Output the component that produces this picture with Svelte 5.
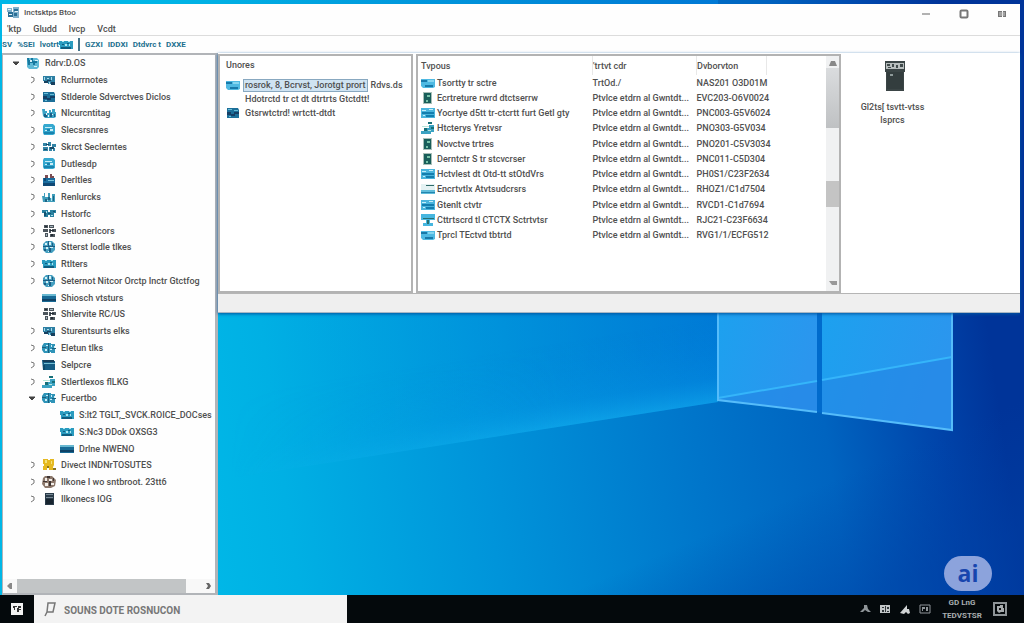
<script lang="ts">
  type Layer = [string, string];
  type Node = { label: string; icon: string; level: number; state?: 'open' | 'closed' };

  const icons: Record<string, Layer[]> = {
    root: [['#5fb9d6', 'M1 1h10l2 2v7l-2 2H3l-2-2z'], ['#17789f', 'M1 1h2v2h2V1h2v3h4v2H9v2H7V6H4v2H2z'], ['#d7f1f8', 'M4 3h2v2H4zM9 3h3v1H9zM8 9h3v1H8z']],
    app: [['#7fb0cc', 'M1 1h5v4H1zM7 0h6v11H7z'], ['#2a6f96', 'M2 5h5v5H2zM8 2h4v2H8zM8 6h3v3H8z'], ['#e3f2f8', 'M2 2h3v1H2zM9 4h3v1H9zM3 7h3v1H3z']],
    monitors: [['#2d7fa3', 'M1 2h5v5H1zM5 2h8v3H5zM6 5h7v5H6z'], ['#163f5d', 'M2 7h4v2H2zM9 8h4v3H9zM5 6h4v1H5z'], ['#a9dcec', 'M2 3h1v3H2zM5 4h2v1H5zM9 3h1v3H9zM7 8h1v2H7z']],
    solid: [['#1c6f99', 'M1 1h11l1 2v8H1z'], ['#153f66', 'M1 5h4v2h3V5h5v2H9v2H5V8H1z'], ['#68bdd8', 'M2 2h4v1H2zM8 3h4v1H8zM3 9h2v1H3z']],
    people: [['#39a3c6', 'M0 2h3v2h2v2h2V3h2v2h1V2h3v3h1v5l-2 1H3L1 9z'], ['#1a5f87', 'M2 7h3v3H2zM8 6h2v4H8zM12 7h1v3h-1z'], ['#e8f8fc', 'M4 6h1v2H4zM6 8h1v2H6zM10 7h1v1h-1z']],
    drive: [['#35a8cf', 'M2 0h9l2 2v8l-2 1H2l-1-2V2z'], ['#c9eef8', 'M3 3h7v1H3zM8 5h3v2H8zM3 6h2v1H3z'], ['#1982ad', 'M2 8h10v2H2zM5 5h3v2H5z']],
    chips: [['#3384a6', 'M1 2h4v3H1zM6 1h3v4H6zM10 3h4v3h-4zM1 6h5v4H1zM7 6h3v4H7zM11 7h2v3h-2z'], ['#174866', 'M2 8h3v1H2zM8 6h4v2H8zM4 3h3v1H4z']],
    bag: [['#1a6d9f', 'M1 4h12v8H1z'], ['#0f4874', 'M1 9h12v3H1zM2 4h2v3H2z'], ['#7b4c53', 'M3 1h3v3H3zM8 0h2v4H8zM10 2h2v2h-2z'], ['#7dc8de', 'M6 6h6v1H6z']],
    towers: [['#3f9dbb', 'M0 5h2V2h1v4h3V2h2v5h2V3h3v8H1z'], ['#1d6484', 'M3 8h2v3H3zM6 6h2v3H6zM11 5h1v5h-1z'], ['#bce7f0', 'M5 9h1v1H5zM9 7h1v3H9z']],
    links: [['#28809f', 'M0 2h6v2h2V2h6v3h-2v4H8V7H6v2H2V5H0z'], ['#145271', 'M2 4h2v4H2zM6 5h3v1H6zM11 3h2v1h-2z'], ['#a9e1ee', 'M4 3h1v2H4zM9 7h2v1H9z']],
    dark: [['#4c555c', 'M2 0h4v3H2zM7 0h5v3H7zM1 4h5v3H1zM7 4h2v4H7zM10 4h4v3h-4zM3 8h3v4H3zM8 9h5v3H8z'], ['#232c34', 'M3 1h2v1H3zM8 5h4v1H8zM9 9h2v2H9z'], ['#a7b7c0', 'M8 1h3v1H8zM4 9h1v2H4z']],
    globe: [['#459fc0', 'M4 0h6l3 3v6l-3 3H4L1 9V3z'], ['#d6f1f7', 'M3 2h2v2H3zM7 1h2v3H7zM4 6h2v2H4zM8 6h3v1H8zM6 10h2v1H6z'], ['#1b5d84', 'M1 5h12v1H1zM6 0h1v5H6zM7 7h2v4H7zM10 2h1v3h-1zM2 8h2v2H2z']],
    cluster: [['#2f94b8', 'M2 1h7v1h4v9h-4v-1H8v1H2L0 8V4z'], ['#cfeef6', 'M4 3h2v1H4zM9 3h1v2H9zM3 7h2v2H3zM8 7h2v1H8zM12 4h1v2h-1z'], ['#1b607f', 'M6 1h1v10H6zM0 5h4v1H0zM10 6h4v1h-4z']],
    keys: [['#2a9bbf', 'M0 2h14v8H1V6H0z'], ['#105d7f', 'M2 8h10v2H2zM3 5h2v1H3zM8 4h2v1H8z'], ['#aee8f2', 'M3 2h2v1H3zM6 5h2v2H6zM10 5h1v2h-1zM9 2h2v1H9z']],
    bar: [['#186a95', 'M0 2h14v8H0z'], ['#68b8d1', 'M0 2h14v2H0z'], ['#0e4266', 'M0 7h14v2H0z']],
    folder: [['#145c83', 'M0 1h6l1 1h6v9H1z'], ['#153d59', 'M1 1h11v2H1z'], ['#75bfd4', 'M2 4h11v1H2z'], ['#0d4969', 'M1 6h2v5H1z']],
    gold: [['#e5b921', 'M1 0h5v1h2V0h4v6l-1 2v3H7V8H5v3H1V7h1V5H1z'], ['#f5e27c', 'M3 1h2v3H3zM9 2h1v3H9z'], ['#8b751b', 'M5 7h2v2H5zM11 9h3v2h-3z']],
    brown: [['#8c786b', 'M3 0h7l4 4-1 6-4 2H3L0 8l1-6z'], ['#f2eee9', 'M3 2h2v3H3zM7 3h3v2H7zM3 7h3v3H3zM9 7h3v2H9z'], ['#3e3432', 'M5 0h3v2H5zM1 5h4v1H1zM7 5h2v5H7zM11 2h1v3h-1z']],
    server: [['#2a3b49', 'M3 0h9v12H3z'], ['#768793', 'M4 1h7v1H4zM4 4h7v1H4z'], ['#17242f', 'M4 6h7v5H4z']],
    green: [['#a9bfb8', 'M2 0h9v12H2z'], ['#195e5a', 'M3 1h7v10H3z'], ['#77c3a9', 'M6 3h3v2H6zM5 8h2v2H5z']],
    blue: [['#4ab5dd', 'M0 1h14v10H0z'], ['#147eae', 'M1 5h12v2H1zM5 8h8v2H5z'], ['#c3effb', 'M1 3h4v1H1zM8 2h4v1H8zM2 8h2v1H2z']],
    flat: [['#4fb9e2', 'M0 2h14v8l-2 1H2l-2-2z'], ['#1879a9', 'M0 3h6v2H0zM4 8h8v2H4z'], ['#86d6f0', 'M7 3h6v2H7z']],
    steps: [['#3ba2c2', 'M0 9h3V6h5V3h5v7h-3v2H0z'], ['#176f78', 'M7 0h4v2H7zM3 6h3v3H3zM10 5h3v2h-3z'], ['#b8e7dc', 'M1 4h7v1H1zM7 8h3v1H7z']],
    page: [['#e4f2f3', 'M0 1h14v10H0z'], ['#2f6967', 'M5 2h8v1H5z'], ['#61bddb', 'M0 7h14v4H0z'], ['#2385ae', 'M0 9h14v1H0z']],
    desk: [['#46b6df', 'M0 0h14v6H9v3h3v3H2V9h3V6H0z'], ['#276f71', 'M6 6h2v4H6zM2 4h11v1H2z']]
  };

  const tree: Node[] = [
    { label: 'Rdrv:D.OS', icon: 'root', level: 0, state: 'open' },
    { label: 'Rclurrnotes', icon: 'monitors', level: 1, state: 'closed' },
    { label: 'Stlderole Sdverctves Diclos', icon: 'solid', level: 1, state: 'closed' },
    { label: 'Nlcurcntitag', icon: 'people', level: 1, state: 'closed' },
    { label: 'Slecsrsnres', icon: 'drive', level: 1, state: 'closed' },
    { label: 'Skrct Seclerntes', icon: 'chips', level: 1, state: 'closed' },
    { label: 'Dutlesdp', icon: 'drive', level: 1, state: 'closed' },
    { label: 'Derltles', icon: 'bag', level: 1, state: 'closed' },
    { label: 'Renlurcks', icon: 'towers', level: 1, state: 'closed' },
    { label: 'Hstorfc', icon: 'links', level: 1, state: 'closed' },
    { label: 'Setlonerlcors', icon: 'dark', level: 1, state: 'closed' },
    { label: 'Stterst lodle tlkes', icon: 'globe', level: 1, state: 'closed' },
    { label: 'Rtlters', icon: 'keys', level: 1, state: 'closed' },
    { label: 'Seternot Nitcor Orctp Inctr Gtctfog', icon: 'globe', level: 1, state: 'closed' },
    { label: 'Shiosch vtsturs', icon: 'bar', level: 1 },
    { label: 'Shlervite RC/US', icon: 'dark', level: 1 },
    { label: 'Sturentsurts elks', icon: 'monitors', level: 1, state: 'closed' },
    { label: 'Eletun tlks', icon: 'cluster', level: 1, state: 'closed' },
    { label: 'Selpcre', icon: 'folder', level: 1, state: 'closed' },
    { label: 'Stlertlexos flLKG', icon: 'steps', level: 1, state: 'closed' },
    { label: 'Fucertbo', icon: 'cluster', level: 1, state: 'open' },
    { label: 'S:lt2 TGLT,_SVCK.ROICE_DOCses', icon: 'keys', level: 2 },
    { label: 'S:Nc3 DDok OXSG3', icon: 'keys', level: 2 },
    { label: 'Drlne NWENO', icon: 'bar', level: 2 },
    { label: 'Divect INDNrTOSUTES', icon: 'gold', level: 1, state: 'closed' },
    { label: 'Ilkone I wo sntbroot. 23tt6', icon: 'brown', level: 1, state: 'closed' },
    { label: 'Ilkonecs IOG', icon: 'server', level: 1, state: 'closed' }
  ];

  const vendor = 'Ptvlce etdrn al Gwntdt...';
  const files = [
    { name: 'Tsortty tr sctre', icon: 'flat', type: 'TrtOd./', date: 'NAS201 O3D01M' },
    { name: 'Ecrtreture rwrd dtctserrw', icon: 'green', type: vendor, date: 'EVC203-O6V0024' },
    { name: 'Yocrtye d5tt tr-ctcrtt furt Getl gty', icon: 'blue', type: vendor, date: 'PNC003-G5V6024' },
    { name: 'Htcterys Yretvsr', icon: 'steps', type: vendor, date: 'PNO303-G5V034' },
    { name: 'Novctve trtres', icon: 'green', type: vendor, date: 'PNO201-C5V3034' },
    { name: 'Derntctr S tr stcvcrser', icon: 'green', type: vendor, date: 'PNC011-C5D304' },
    { name: 'Hctvlest dt Otd-tt stOtdVrs', icon: 'blue', type: vendor, date: 'PH0S1/C23F2634' },
    { name: 'Encrtvtlx Atvtsudcrsrs', icon: 'page', type: vendor, date: 'RHOZ1/C1d7504' },
    { name: 'Gtenlt ctvtr', icon: 'blue', type: vendor, date: 'RVCD1-C1d7694' },
    { name: 'Cttrtscrd tl CTCTX Sctrtvtsr', icon: 'desk', type: vendor, date: 'RJC21-C23F6634' },
    { name: 'Tprcl TEctvd tbtrtd', icon: 'flat', type: vendor, date: 'RVG1/1/ECFG512' }
  ];

  let selected = $state(0);
  let query = $state('');
</script>

{#snippet icon(name: string)}
  <svg class="icon" viewBox="0 0 14 12" aria-hidden="true">
    {#each icons[name] as [fill, d]}
      <path {fill} {d} />
    {/each}
  </svg>
{/snippet}

<div class="desktop">
  <svg class="wallpaper" viewBox="0 0 1024 623" preserveAspectRatio="none" aria-hidden="true">
    <defs>
      <linearGradient id="sky" gradientUnits="userSpaceOnUse" x1="219" y1="595" x2="1010" y2="480">
        <stop offset="0" stop-color="#00b7e7" />
        <stop offset="0.1" stop-color="#00b0e4" />
        <stop offset="0.35" stop-color="#0094da" />
        <stop offset="0.62" stop-color="#0075ca" />
        <stop offset="0.78" stop-color="#0064c0" />
        <stop offset="0.92" stop-color="#0044aa" />
        <stop offset="1" stop-color="#003499" />
      </linearGradient>
      <linearGradient id="beam" gradientUnits="userSpaceOnUse" x1="460" y1="443" x2="447" y2="360">
        <stop offset="0" stop-color="#18b8f4" stop-opacity="0.5" />
        <stop offset="0.3" stop-color="#0aa0ec" stop-opacity="0.2" />
        <stop offset="1" stop-color="#0080dc" stop-opacity="0" />
      </linearGradient>
      <linearGradient id="fade" gradientUnits="userSpaceOnUse" x1="230" y1="0" x2="560" y2="0">
        <stop offset="0" stop-color="#fff" stop-opacity="0" />
        <stop offset="1" stop-color="#fff" />
      </linearGradient>
      <mask id="beam-mask">
        <rect width="1024" height="623" fill="url(#fade)" />
      </mask>
      <linearGradient id="upper" gradientUnits="userSpaceOnUse" x1="219" y1="0" x2="718" y2="0">
        <stop offset="0" stop-color="#00b4e6" stop-opacity="0" />
        <stop offset="1" stop-color="#007fdd" stop-opacity="0.7" />
      </linearGradient>
      <linearGradient id="corner" gradientUnits="userSpaceOnUse" x1="726" y1="526" x2="773" y2="636">
        <stop offset="0" stop-color="#0040a4" stop-opacity="0" />
        <stop offset="1" stop-color="#0040a4" stop-opacity="0.5" />
      </linearGradient>
      <linearGradient id="glass" x1="0" y1="0" x2="1" y2="0.3">
        <stop offset="0" stop-color="#1ca1ef" />
        <stop offset="1" stop-color="#2b96ee" />
      </linearGradient>
    </defs>
    <rect width="1024" height="623" fill="url(#sky)" />
    <path d="M219 0H718V402L219 480Z" fill="url(#upper)" />
    <path d="M219 313H718V402L219 480Z" fill="url(#beam)" mask="url(#beam-mask)" />
    <rect width="1024" height="623" fill="url(#corner)" />
    <path d="M718 300H817V412L718 400Z" fill="url(#glass)" />
    <path d="M822 300H952V430L822 413Z" fill="url(#glass)" />
    <path d="M718 398L817 381V412L718 400ZM822 380L952 357V430L822 413Z" fill="#247fe2" opacity="0.5" />
    <path d="M817 300H822V413L817 412Z" fill="#006bcd" />
    <path d="M718 398L817 381M822 380L952 357" stroke="#35b5fa" stroke-width="2" />
    <path d="M718 300V400L817 412M822 413L952 430V300" fill="none" stroke="#55bcfa" stroke-width="2" />
  </svg>

  <main class="console">
    <header>
      <div class="titlebar">
        {@render icon('app')}
        <h1>Inctsktps Btoo</h1>
        <div class="window-buttons">
          <button aria-label="Minimize"><svg viewBox="0 0 10 10"><path d="M1 5h8" stroke="#666" stroke-width="1" /></svg></button>
          <button aria-label="Maximize"><svg viewBox="0 0 10 10"><rect x="1.500" y="1.500" width="7" height="7" rx="1" fill="none" stroke="#777" stroke-width="2" /></svg></button>
          <button aria-label="Close"><svg viewBox="0 0 10 10"><path d="M1 2h4v6H1zM6 2h3v6H6z" fill="#777" /><path d="M2 4h6M2 6h6" stroke="#ccc" stroke-width="1" /></svg></button>
        </div>
      </div>
      <nav class="menu">
        <button>'ktp</button>
        <button>Gludd</button>
        <button>lvcp</button>
        <button>Vcdt</button>
      </nav>
      <div class="toolbar">
        <button>SV</button>
        <button>%SEI</button>
        <button>lvotrt{@render icon('keys')}</button>
        <span class="divider"></span>
        <button>GZXI</button>
        <button>IDDXI</button>
        <button>Dtdvrc t</button>
        <button>DXXE</button>
      </div>
    </header>

    <div class="body">
      <aside>
        <ul class="tree">
          {#each tree as node}
            <li class="level-{node.level}">
              <button>
                <svg class="chevron" viewBox="0 0 12 12" aria-hidden="true">
                  {#if node.state === 'open'}
                    <path d="M3 5h6L6 8z" fill="#444" stroke="#444" />
                  {:else if node.state === 'closed'}
                    <path d="M5 3l3 1v3L5 9" fill="none" stroke="#777" />
                  {/if}
                </svg>
                {@render icon(node.icon)}
                <span>{node.label}</span>
              </button>
            </li>
          {/each}
        </ul>
        <div class="hscroll">
          <button aria-label="Scroll left"><svg viewBox="0 0 8 8"><path d="M1 4l3-3h2v6H4z" fill="#888" /></svg></button>
          <div class="hthumb"></div>
          <button aria-label="Scroll right"><svg viewBox="0 0 8 8"><path d="M2 1h3l2 3-2 3H2l2-3z" fill="#666" /></svg></button>
        </div>
      </aside>

      <div class="content">
        <div class="panes">
          <section class="pane users">
            <h2>Unores</h2>
            <button class="entry" onclick={() => (selected = 0)}>
              {@render icon('flat')}
              <span class="label" class:selected={selected === 0}>rosrok, 8, Bcrvst, Jorotgt prort</span>
              <span>Rdvs.ds</span>
            </button>
            <p>Hdotrctd tr ct dt dtrtrts Gtctdtt!</p>
            <button class="entry" onclick={() => (selected = 1)}>
              {@render icon('solid')}
              <span class="label" class:selected={selected === 1}>Gtsrwtctrd! wrtctt-dtdt</span>
            </button>
          </section>

          <section class="pane files">
            <table>
              <thead>
                <tr><th>Tvpous</th><th>'trtvt cdr</th><th>Dvborvton</th></tr>
              </thead>
              <tbody>
                {#each files as file}
                  <tr>
                    <td><div class="name">{@render icon(file.icon)}{file.name}</div></td>
                    <td>{file.type}</td>
                    <td>{file.date}</td>
                  </tr>
                {/each}
              </tbody>
            </table>
            <div class="vscroll">
              <button aria-label="Scroll up"><svg viewBox="0 0 8 8"><path d="M2 1h4l2 5H0z" fill="#888" /></svg></button>
              <div class="vthumb"></div>
              <div class="vmark"></div>
              <button aria-label="Scroll down"><svg viewBox="0 0 8 8"><path d="M0 2h8v4H3z" fill="#999" /></svg></button>
            </div>
          </section>

          <section class="device">
            <svg viewBox="0 0 22 32" aria-hidden="true">
              <path d="M1 1h20v11h-1v19H2V12H1z" fill="#3b4546" />
              <path d="M2 3h18v6H2z" fill="#b8bebe" />
              <path d="M3 4h3v2H3zM8 4h2v3H8zM12 5h2v3h-2zM16 4h3v3h-3zM4 7h3v1H4z" fill="#414b4c" />
              <path d="M3 12h16v17H3z" fill="#333d3e" />
              <path d="M6 14h3v2H6z" fill="#8d9999" />
            </svg>
            <span>Gl2ts[ tsvtt-vtss<br />lsprcs</span>
          </section>
        </div>
        <footer></footer>
      </div>
    </div>
  </main>

  <div class="ai">ai</div>

  <div class="taskbar">
    <button class="start" aria-label="Start">
      <svg viewBox="0 0 12 12"><path d="M0 0h12v12H0z" fill="#f2f2f2" /><path d="M2 3h4v1H4v3H3V5H2zM7 3h3v2H8v1h2v1H8v2H6V5h1z" fill="#333" /></svg>
    </button>
    <label class="search">
      <svg viewBox="0 0 12 16" aria-hidden="true"><path d="M4 2h7L9 11H3zM3 11L1 15" fill="none" stroke="#777" stroke-width="1.500" /></svg>
      <input type="text" bind:value={query} placeholder="SOUNS DOTE ROSNUCON" aria-label="Search" />
    </label>
    <div class="tray">
      <button aria-label="Show hidden icons"><svg viewBox="0 0 12 12"><path d="M5 2h3l1 4 3 3H9L6 7 4 9H1l4-4z" fill="#8e9498" /></svg></button>
      <button aria-label="Keyboard"><svg viewBox="0 0 12 12"><path d="M1 2h10v8H1z" fill="#c3c7c9" /><path d="M3 4h2v1H3zM3 7h2v2H3zM6 3h1v6H6zM8 4h2v2H8zM8 8h2v1H8z" fill="#30363a" /></svg></button>
      <button aria-label="Network"><svg viewBox="0 0 12 12"><path d="M1 10l7-8v4h2l1 4-2 1-2-2-2 2z" fill="#d0d3d5" /></svg></button>
      <button aria-label="Volume"><svg viewBox="0 0 12 12"><path d="M1 2h10v8H1z" fill="none" stroke="#8e9498" stroke-width="1" /><path d="M3 4h3v2H4v2H3zM7 4h2v4H7z" fill="#8e9498" /></svg></button>
      <div class="clock"><span>GD LnG</span><span>TEDVSTSR</span></div>
      <button class="notify" aria-label="Notifications"><svg viewBox="0 0 14 14"><path d="M1 1h12v12H1z" fill="none" stroke="#8e9498" stroke-width="2" /><path d="M4 4h3V3h3v3h1v4H8L6 11 4 9z" fill="#a6abae" /><path d="M6 6h2v2H6z" fill="#111" /></svg></button>
    </div>
  </div>
</div>

<style>
  :global(body) {
    margin: 0;
  }

  .desktop {
    position: relative;
    display: flex;
    flex-direction: column;
    min-height: 100vh;
    background: #0080d6;
    font-family: Roboto, "Liberation Sans", sans-serif;
    font-size: 9px;
    font-weight: 500;
    line-height: 12px;
    color: #505050;
  }

  .wallpaper {
    position: absolute;
    inset: 0;
    width: 100%;
    height: 100%;
  }

  button {
    display: flex;
    align-items: center;
    padding: 0;
    border: 0;
    background: none;
    font: inherit;
    color: inherit;
    white-space: nowrap;
  }

  h1,
  h2,
  p,
  ul {
    margin: 0;
    padding: 0;
    font-size: inherit;
    font-weight: inherit;
    list-style: none;
  }

  .icon {
    flex: none;
    width: 14px;
    height: 12px;
  }

  .console {
    position: relative;
    flex: 1;
    display: flex;
    flex-direction: column;
    padding: 4px 4px 0 2px;
  }

  header {
    background: #fefefe;
  }

  .titlebar {
    display: flex;
    align-items: center;
    gap: 4px;
    height: 18px;
    padding-left: 4px;
  }

  h1 {
    font-size: 8px;
  }

  .window-buttons {
    display: flex;
    gap: 28px;
    margin-left: auto;
    padding: 2px 13px 0 0;
  }

  .window-buttons svg {
    display: block;
    width: 10px;
    height: 10px;
  }

  .menu {
    display: flex;
    gap: 12px;
    height: 13px;
    padding-left: 5px;
    border-bottom: 1px solid #dcdcdc;
  }

  .toolbar {
    display: flex;
    align-items: center;
    gap: 5px;
    height: 17px;
    overflow: hidden;
    color: #22708f;
    font-weight: bold;
    font-size: 8px;
  }

  .divider {
    width: 2px;
    height: 13px;
    background: #44738a;
  }

  .body {
    flex: 1;
    display: flex;
    align-items: flex-start;
  }

  aside {
    flex: none;
    align-self: stretch;
    display: flex;
    flex-direction: column;
    box-sizing: border-box;
    width: 216px;
    border: solid #b1b4b8;
    border-width: 2px 3px 2px 1px;
    background: #fefefe;
  }

  .tree {
    display: flex;
    flex-direction: column;
    justify-content: space-between;
    height: 452px;
    overflow: hidden;
  }

  .tree button {
    height: 16px;
  }

  .tree span {
    margin-left: 5px;
  }

  .chevron {
    flex: none;
    width: 12px;
    height: 12px;
    margin-right: 4px;
  }

  .level-0 {
    padding-left: 7px;
  }

  .level-1 {
    padding-left: 23px;
  }

  .level-2 {
    padding-left: 41px;
  }

  .hscroll {
    display: flex;
    align-items: center;
    margin-top: auto;
    padding: 0 3px;
    background: #f8f8f8;
  }

  .hscroll svg,
  .vscroll svg {
    display: block;
    width: 8px;
    height: 8px;
  }

  .hthumb {
    width: 169px;
    height: 14px;
    margin: 0 auto 0 3px;
    background: #c2c5c6;
  }

  .content {
    flex: 1;
    min-width: 0;
    border-bottom: 1px solid #a9b7c4;
    background: #efefef;
    box-shadow: 0 1px 3px #0055a0;
  }

  .panes {
    display: flex;
    gap: 3px;
    padding-top: 1px;
    border-bottom: 1px solid #b5b5b5;
    background: #fff;
  }

  .pane {
    box-sizing: border-box;
    height: 239px;
    border: 2px solid #b3b3b3;
    background: #fff;
  }

  .users {
    flex: none;
    width: 195px;
    padding: 3px 0 0 6px;
  }

  .users h2 {
    margin-bottom: 6px;
  }

  .users p {
    padding-left: 19px;
    white-space: nowrap;
  }

  .entry {
    gap: 4px;
    height: 16px;
  }

  .label {
    padding: 0 1px;
    line-height: 11px;
  }

  .selected {
    outline: 1px solid #88a8c0;
    background: #cfe3f2;
  }

  .files {
    display: flex;
    flex: 1;
    max-width: 425px;
    padding-left: 3px;
  }

  table {
    width: 346px;
    height: 187px;
    table-layout: fixed;
    border-collapse: collapse;
  }

  th,
  td {
    height: 15px;
    padding: 0;
    font-weight: inherit;
    text-align: left;
    white-space: nowrap;
  }

  th {
    height: 19px;
    border-right: 1px solid #e8e8e8;
  }

  th:nth-child(1) {
    width: 171px;
  }

  th:nth-child(2) {
    width: 103px;
  }

  .name {
    display: flex;
    align-items: center;
    gap: 2px;
  }

  .vscroll {
    display: flex;
    flex-direction: column;
    align-items: center;
    width: 13px;
    margin-left: auto;
    padding: 4px 0;
    background: #f0f1f2;
  }

  .vthumb {
    width: 100%;
    height: 60px;
    margin-bottom: 53px;
    background: linear-gradient(#dadcde, #bfc1c3);
  }

  .vmark {
    width: 100%;
    height: 26px;
    margin-bottom: auto;
    background: #c4c4c4;
  }

  .device {
    flex: none;
    display: flex;
    flex-direction: column;
    align-items: center;
    gap: 9px;
    width: 97px;
    margin-right: 79px;
    padding-top: 6px;
    line-height: 13px;
    text-align: center;
  }

  .device svg {
    width: 22px;
    height: 32px;
    margin-left: 4px;
  }

  footer {
    height: 18px;
  }

  .ai {
    position: absolute;
    right: 32px;
    bottom: 32px;
    width: 48px;
    border-radius: 18px;
    background: #8ca3dc;
    color: #1745ae;
    font-family: "Open Sans", sans-serif;
    font-size: 23px;
    font-weight: bold;
    line-height: 35px;
    text-align: center;
  }

  .taskbar {
    position: relative;
    display: flex;
    height: 28px;
    background: #04090c;
  }

  .start {
    justify-content: center;
    width: 34px;
  }

  .start svg {
    width: 12px;
    height: 12px;
  }

  .search {
    display: flex;
    align-items: center;
    gap: 8px;
    box-sizing: border-box;
    width: 313px;
    padding: 0 10px;
    background: #f3f3f3;
  }

  .search svg {
    width: 12px;
    height: 16px;
  }

  .search input {
    flex: 1;
    min-width: 0;
    padding: 3px 0 0;
    border: 0;
    outline: 0;
    background: none;
    font: bold 10px Roboto, "Liberation Sans", sans-serif;
    color: #666;
  }

  .search input::placeholder {
    color: #777;
  }

  .tray {
    display: flex;
    align-items: center;
    gap: 8px;
    margin-left: auto;
    padding-right: 17px;
    color: #a8adb0;
  }

  .tray svg {
    display: block;
    width: 12px;
    height: 12px;
  }

  .tray .notify svg {
    width: 14px;
    height: 14px;
  }

  .clock {
    display: flex;
    flex-direction: column;
    align-items: center;
    width: 46px;
    font-size: 8px;
    font-weight: bold;
    line-height: 13px;
  }
</style>
